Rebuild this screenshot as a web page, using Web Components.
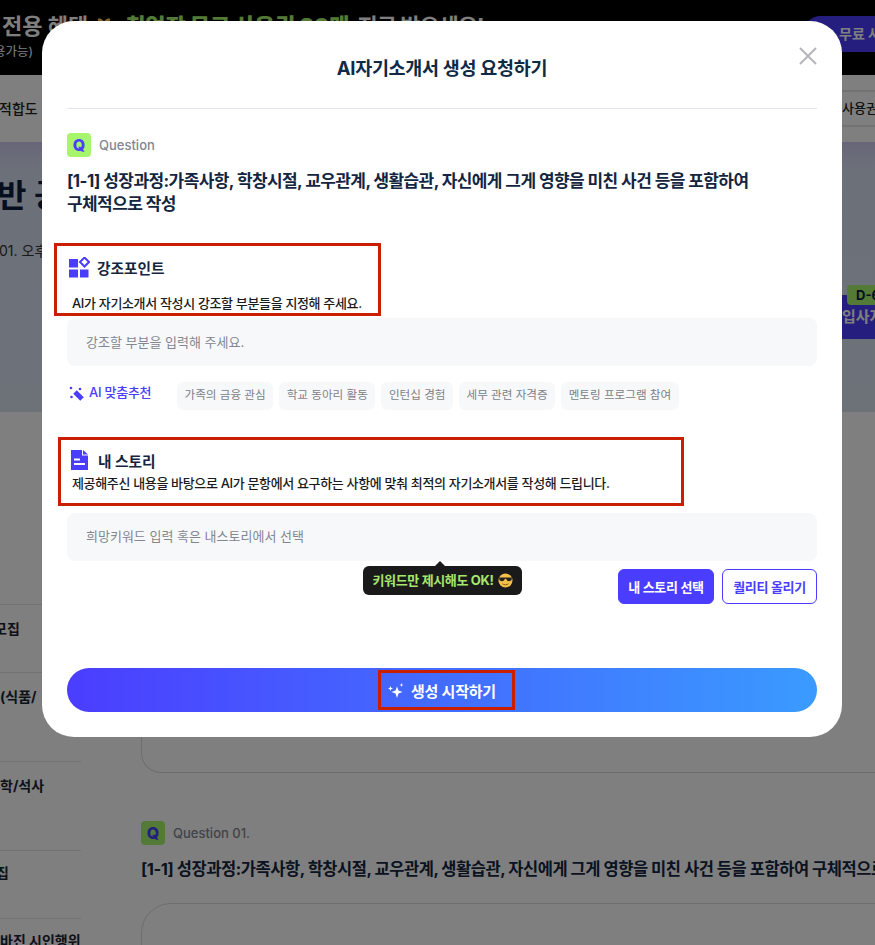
<!DOCTYPE html>
<html lang="ko">
<head>
<meta charset="utf-8">
<title>AI자기소개서 생성 요청하기</title>
<style>
    html, body { margin: 0; padding: 0; background: #fff; }
    body { font-family: Inter, "Noto Sans CJK KR", sans-serif; color: #0f2a47; }
</style>
</head>
<body>

<resume-page>
    <promo-bar></promo-bar>
    <tab-bar></tab-bar>
    <hero-banner></hero-banner>
    <page-body></page-body>
</resume-page>

<ai-modal>
    <question-head label="Question" style="--q-size:17px; --q-spacing:-0.58px; --q-gap:13px">[1-1] 성장과정:가족사항, 학창시절, 교우관계, 생활습관, 자신에게 그게 영향을 미친 사건 등을 포함하여<br>구체적으로 작성</question-head>

    <note-box style="--box-left:-13px; --box-width:327px; --box-height:73px; --box-top:27px" heading="강조포인트" icon="grid" variant="wide">AI가 자기소개서 작성시 강조할 부분들을 지정해 주세요.</note-box>
    <soft-input style="--input-top:2px">강조할 부분을 입력해 주세요.</soft-input>
    <suggest-row></suggest-row>

    <note-box style="--box-left:-9px; --box-width:626px; --box-height:69px; --box-top:27px" heading="내 스토리" icon="doc">제공해주신 내용을 바탕으로 AI가 문항에서 요구하는 사항에 맞춰 최적의 자기소개서를 작성해 드립니다.</note-box>
    <soft-input style="--input-top:7px; --input-line:46px">희망키워드 입력 혹은 내스토리에서 선택
        <keyword-tip slot="tip"></keyword-tip>
    </soft-input>
    <story-actions></story-actions>
    <start-button></start-button>
</ai-modal>

<script>
const pageTemplate = document.createElement('template');
pageTemplate.innerHTML = `
<style>
    :host { display: flex; flex-direction: column; width: 875px; height: 945px; overflow: hidden; background: #fff; }
</style>
<slot></slot>
`;

class ResumePage extends HTMLElement {
    constructor() {
        super();
        this.attachShadow({ mode: 'open' }).appendChild(pageTemplate.content.cloneNode(true));
    }
}

class PromoBar extends HTMLElement {
    constructor() {
        super();
        this.attachShadow({ mode: 'open' }).innerHTML = `
<style>
    :host { display: flex; flex: none; height: 75px; background: #000; color: #fff; justify-content: space-between; overflow: hidden; }
    .copy { padding-top: 12px; white-space: nowrap; }
    .main { font-size: 22px; line-height: 28px; font-weight: 700; display: flex; align-items: center; padding-left: 2px; }
    .main b { color: #a6f56c; margin-left: 10px; margin-right: 8px; letter-spacing: -0.1px; }
    .main i { font-style: normal; letter-spacing: -1px; }
    .main svg { margin-left: 5px; }
    .sub { font-size: 12.500px; line-height: 18px; margin-left: -22px; margin-top: 3px; }
    .free { align-self: flex-start; margin-top: 16px; width: 90px; height: 36px; flex: none; margin-right: -18px; border-radius: 18px 0 0 18px; background: #4b3dff; font-size: 14px; font-weight: 700; line-height: 36px; padding-left: 36px; box-sizing: border-box; white-space: nowrap; overflow: hidden; }
</style>
<div class="copy">
    <div class="main">전용 혜택
        <svg width="22" height="22" viewBox="0 0 20 20"><rect x="2" y="6" width="16" height="13" fill="#f0483e"/><rect x="8" y="6" width="4" height="13" fill="#ffcc4d"/><path d="M10 6C6 1 3 3 5 6zM10 6c4-5 7-3 5 0z" fill="#ffcc4d"/></svg>
        <b>취업장 무료 사용권 30매</b><i>지금 받으세요!</i></div>
    <div class="sub">(사용가능)</div>
</div>
<div class="free">무료 사용권</div>`;
    }
}

class TabBar extends HTMLElement {
    constructor() {
        super();
        this.attachShadow({ mode: 'open' }).innerHTML = `
<style>
    :host { display: flex; flex: none; height: 67px; background: #fff; justify-content: space-between; align-items: center; overflow: hidden; font-size: 14px; font-weight: 500; color: #222; white-space: nowrap; }
    .left { margin-left: -1px; padding-bottom: 1px; margin-top: -1px; }
    .right { width: 33px; height: 33px; border-top: 2px solid #e4e4e4; border-bottom: 2px solid #e4e4e4; line-height: 33px; font-size: 13px; margin-top: -1px; }
</style>
<div class="left">적합도</div>
<div class="right">사용권</div>`;
    }
}

class HeroBanner extends HTMLElement {
    constructor() {
        super();
        this.attachShadow({ mode: 'open' }).innerHTML = `
<style>
    :host { display: flex; flex: none; height: 270px; background: linear-gradient(180deg, #cfcdf2 0, #d9e1f2 26px, #dbe3f1 100%); justify-content: space-between; overflow: hidden; }
    .title { margin: 34px 0 0 -3px; font-size: 32px; line-height: 40px; font-weight: 700; color: #0f1d3a; white-space: nowrap; }
    .date { margin: 25px 0 0 -1px; font-size: 14px; line-height: 20px; color: #333; white-space: nowrap; }
    .side { width: 33px; margin-top: 143px; position: relative; }
    .apply { margin-top: 10px; height: 44px; background: #4b3dff; color: #fff; font-size: 15px; font-weight: 700; line-height: 44px; white-space: nowrap; overflow: hidden; }
    .dday { position: absolute; top: 0; left: 5px; width: 40px; height: 20px; background: #a6f56c; border-radius: 4px; font-size: 13px; font-weight: 700; line-height: 20px; padding-left: 9px; color: #0f1d3a; white-space: nowrap; }
</style>
<div>
    <div class="title">반 공</div>
    <div class="date">01. 오후</div>
</div>
<div class="side"><div class="apply">입사지</div><div class="dday">D-6</div></div>`;
    }
}

class PageBody extends HTMLElement {
    constructor() {
        super();
        this.attachShadow({ mode: 'open' }).innerHTML = `
<style>
    :host { display: flex; flex: 1; min-height: 0; background: #fff; overflow: hidden; gap: 60px; }
    .side { width: 81px; flex: none; padding-top: 192px; font-size: 14px; font-weight: 700; color: #1a2433; white-space: nowrap; overflow: hidden; }
    .side div { border-top: 1px solid #e2e4ea; padding-top: 14px; box-sizing: border-box; line-height: 20px; }
    .main { flex: 1; min-width: 0; padding-top: 0; }
    .card { width: 800px; box-sizing: border-box; border: 1px solid #d9dbe0; }
    .top { height: 361px; border-radius: 0 0 0 20px; border-top: none; }
    .bottom { height: 80px; border-radius: 30px 0 0 0; margin-top: 22px; }
    question-head { display: block; margin-top: 48px; --q-gap: 13px; --q-size: 16.5px; --q-spacing: -0.46px; }
</style>
<div class="side">
    <div style="height:68px; text-indent:-6px">모집</div>
    <div style="height:89px">(식품/</div>
    <div style="height:89px">학/석사</div>
    <div style="height:68px; text-indent:-4px; padding-top:12px">집</div>
    <div style="padding-top:12px">바진 시인행위</div>
</div>
<div class="main">
    <div class="card top"></div>
    <question-head label="Question 01." nowrap>[1-1] 성장과정:가족사항, 학창시절, 교우관계, 생활습관, 자신에게 그게 영향을 미친 사건 등을 포함하여 구체적으로 작성</question-head>
    <div class="card bottom"></div>
</div>`;
    }
}

class QuestionHead extends HTMLElement {
    constructor() {
        super();
        this.attachShadow({ mode: 'open' }).innerHTML = `
<style>
    :host { display: block; }
    .label { display: flex; align-items: center; gap: 8px; font-size: 13px; font-weight: 500; color: #83868f; }
    .q { width: 24px; height: 24px; border-radius: 4px; background: #a6f56c; color: #4b3dff; font-size: 16px; font-weight: 800; line-height: 24px; text-align: center; }
    .text { margin-top: var(--q-gap, 12px); font-size: var(--q-size, 16px); line-height: 23px; font-weight: 700; letter-spacing: var(--q-spacing, -0.25px); color: #14263f; }
    :host([nowrap]) .text { white-space: nowrap; }
</style>
<div class="label"><span class="q">Q</span><span class="name"></span></div>
<div class="text"><slot></slot></div>`;
    }

    connectedCallback() {
        this.shadowRoot.querySelector('.name').textContent = this.getAttribute('label');
    }
}

const icons = {
    grid: `<svg width="21" height="21" viewBox="0 0 21 21" fill="#4b3dff"><rect x="0" y="2" width="9" height="8.500"/><rect x="0" y="12.500" width="9" height="8"/><rect x="11" y="12.500" width="8.500" height="8"/><path d="M15.500 0.500l4.500 4.500-4.500 4.500-4.500-4.500z" fill="#fff" stroke="#4b3dff" stroke-width="2"/></svg>`,
    doc: `<svg width="17" height="20" viewBox="0 0 17 20"><path d="M0 0h11v5.500h6V20H0z" fill="#4b3dff"/><path d="M12 0l5 4.500h-5z" fill="#4b3dff"/><path d="M3 9.500h6M3 14h11" stroke="#fff" stroke-width="2"/></svg>`
};

class NoteBox extends HTMLElement {
    constructor() {
        super();
        this.attachShadow({ mode: 'open' }).innerHTML = `
<style>
    :host { display: block; margin-top: var(--box-top); margin-left: var(--box-left); width: var(--box-width); height: var(--box-height); box-sizing: border-box; border: 3px solid #c91f00; background: #fff; padding: 0 0 0 10px; }
    .head { display: flex; align-items: center; font-size: 14.700px; font-weight: 700; color: #14263f; }
    .desc { font-size: 13px; line-height: 18px; font-weight: 500; letter-spacing: -0.35px; color: #1b1b1b; white-space: nowrap; }
    :host([variant=wide]) { padding-top: 9px; }
    :host([variant=wide]) .head { height: 24px; gap: 7px; padding-left: 2px; }
    :host([variant=wide]) .desc { margin: 15px 0 0 5px; }
    :host(:not([variant=wide])) { padding-top: 7px; }
    :host(:not([variant=wide])) .head { height: 26px; gap: 10px; }
    :host(:not([variant=wide])) .desc { margin: 1px 0 0 1px; }
</style>
<div class="head"><span class="icon" style="display:flex"></span><span class="title"></span></div>
<div class="desc"><slot></slot></div>`;
    }

    connectedCallback() {
        this.shadowRoot.querySelector('.icon').innerHTML = icons[this.getAttribute('icon')];
        this.shadowRoot.querySelector('.title').textContent = this.getAttribute('heading');
    }
}

class SoftInput extends HTMLElement {
    constructor() {
        super();
        this.attachShadow({ mode: 'open' }).innerHTML = `
<style>
    :host { display: block; position: relative; margin-top: var(--input-top, 0); height: 48px; border-radius: 8px; background: #f7f8fa; padding-left: 19px; font-size: 13px; line-height: var(--input-line, 48px); color: #83868f; }
</style>
<slot></slot><slot name="tip"></slot>`;
    }
}

class SuggestRow extends HTMLElement {
    constructor() {
        super();
        const chips = ['가족의 금융 관심', '학교 동아리 활동', '인턴십 경험', '세무 관련 자격증', '멘토링 프로그램 참여'];
        this.attachShadow({ mode: 'open' }).innerHTML = `
<style>
    :host { display: flex; align-items: flex-start; margin-top: 16px; height: 28px; }
    .ai { width: 110px; flex: none; display: flex; gap: 5px; align-items: center; height: 19px; padding-left: 2px; box-sizing: border-box; font-size: 13px; font-weight: 500; color: #4b3dff; letter-spacing: -0.25px; }
    .chips { display: flex; gap: 6px; }
    .chip { height: 28px; line-height: 27px; padding: 0 7.500px; border-radius: 6px; background: #f7f8fa; font-size: 11.600px; color: #7d8088; white-space: nowrap; }
</style>
<div class="ai">
    <svg width="15" height="15" viewBox="0 0 15 15" fill="#4b3dff" style="flex:none; margin-top:3px"><path d="M6 6l7 7" stroke="#4b3dff" stroke-width="5"/><circle cx="2" cy="2" r="1.300"/><circle cx="11" cy="3" r="1.300"/><circle cx="2.500" cy="11" r="1.300"/></svg>
    AI 맞춤추천</div>
<div class="chips">${chips.map(c => `<span class="chip">${c}</span>`).join('')}</div>`;
    }
}

class KeywordTip extends HTMLElement {
    constructor() {
        super();
        this.attachShadow({ mode: 'open' }).innerHTML = `
<style>
    :host { position: absolute; left: 296px; top: 53px; width: 159px; height: 29px; border-radius: 6px; background: #1a1a1a; color: #a6e66c; font-size: 13px; font-weight: 700; letter-spacing: -0.35px; display: flex; align-items: center; justify-content: center; gap: 4px; line-height: 1; white-space: nowrap; }
    :host::before { content: ""; position: absolute; left: 72px; top: -5px; border: 5px solid transparent; border-top: 0; border-bottom-color: #1a1a1a; }
</style>
<span>키워드만 제시해도 OK!</span>
<svg width="15" height="15" viewBox="0 0 15 15"><circle cx="7.500" cy="7.500" r="7" fill="#f5c04a"/><path d="M1 4.500h13l-.5 2.500c-.4 1.300-3.500 1.600-4.400.4L8 5.800H7L5.900 7.400C5 8.600 1.900 8.300 1.500 7z" fill="#222"/><path d="M4.500 10.800c1.600 1.300 4.400 1.300 6 0" stroke="#8a5a12" fill="none"/></svg>`;
    }
}

class StoryActions extends HTMLElement {
    constructor() {
        super();
        this.attachShadow({ mode: 'open' }).innerHTML = `
<style>
    :host { display: flex; justify-content: flex-end; gap: 8px; margin-top: 8px; }
    button { width: 96px; height: 35px; box-sizing: border-box; border-radius: 6px; border: 1px solid #4b3dff; font: 700 13px Inter, "Noto Sans CJK KR", sans-serif; letter-spacing: -0.3px; padding: 0; }
    .solid { background: #4b3dff; color: #fff; }
    .line { width: 95px; background: #fff; color: #4b3dff; }
</style>
<button class="solid">내 스토리 선택</button>
<button class="line">퀄리티 올리기</button>`;
    }
}

class StartButton extends HTMLElement {
    constructor() {
        super();
        this.attachShadow({ mode: 'open' }).innerHTML = `
<style>
    :host { display: flex; justify-content: center; align-items: center; margin-top: 64px; height: 44px; border-radius: 22px; background: linear-gradient(90deg, #4b3dff 0, #3a9bff 100%); }
    .mark { display: flex; align-items: center; gap: 7px; width: 137px; height: 40px; box-sizing: border-box; border: 3px solid #c91f00; padding-left: 7px; font-size: 15px; font-weight: 700; color: #fff; letter-spacing: -0.2px; white-space: nowrap; margin-left: 9px; }
    svg { flex: none; margin-top: 2px; }
</style>
<div class="mark">
    <svg width="16" height="16" viewBox="0 0 16 16" fill="#fff"><path d="M9 3.500l1.500 4 4 1.500-4 1.500L9 15l-1.500-4.500-4-1.500 4-1.500zM2.500 3l.7 1.800 1.800.7-1.800.7L2.500 8l-.7-1.800L0 5.500l1.800-.7zM13.500 0l.5 1.500 1.500.5-1.500.5-.5 1.500-.5-1.500L11.500 2 13 1.500z"/></svg>
    생성 시작하기</div>`;
    }
}

class AiModal extends HTMLElement {
    constructor() {
        super();
        this.attachShadow({ mode: 'open' }).innerHTML = `
<style>
    :host { position: fixed; inset: 0; background: rgba(0,0,0,.5); display: block; padding: 21px 0 0 42px; box-sizing: border-box; }
    .dialog { position: relative; width: 800px; height: 716px; box-sizing: border-box; border-radius: 32px; background: #fff; padding: 0 25px; }
    header { height: 88px; box-sizing: border-box; border-bottom: 1px solid #e2e4ee; text-align: center; padding-top: 34px; font-size: 18.500px; line-height: 26px; font-weight: 700; color: #0f2a47; letter-spacing: -0.3px; margin-bottom: 24px; }
    .close { position: absolute; right: 25px; top: 26px; width: 18px; height: 18px; }
</style>
<div class="dialog" role="dialog">
    <header>AI자기소개서 생성 요청하기</header>
    <svg class="close" viewBox="0 0 18 18" stroke="#b4b6bc" stroke-width="2" fill="none"><path d="M1 1l16 16M17 1L1 17"/></svg>
    <slot></slot>
</div>`;
    }
}

customElements.define('resume-page', ResumePage);
customElements.define('promo-bar', PromoBar);
customElements.define('tab-bar', TabBar);
customElements.define('hero-banner', HeroBanner);
customElements.define('page-body', PageBody);
customElements.define('question-head', QuestionHead);
customElements.define('note-box', NoteBox);
customElements.define('soft-input', SoftInput);
customElements.define('suggest-row', SuggestRow);
customElements.define('keyword-tip', KeywordTip);
customElements.define('story-actions', StoryActions);
customElements.define('start-button', StartButton);
customElements.define('ai-modal', AiModal);
</script>
</body>
</html>
